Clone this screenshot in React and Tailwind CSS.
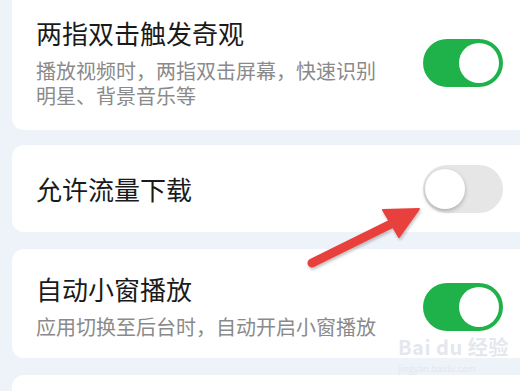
import { useState } from "react";

const Toggle = ({ on, onClick, className = "" }) => (
  <button
    onClick={onClick}
    className={`relative shrink-0 w-[80px] h-[48px] rounded-full transition-colors ${
      on ? "bg-[#1fb24a]" : "bg-[#e6e6e6]"
    } ${className}`}
  >
    <span
      className={`absolute top-[4px] w-[40px] h-[40px] rounded-full bg-white transition-all ${
        on ? "left-[36px]" : "left-[2px] shadow-[0_2px_4px_rgba(0,0,0,0.25)]"
      }`}
    />
  </button>
);

const SettingCard = ({ title, desc, on, onToggle, className }) => (
  <div
    className={`flex items-center w-[520px] bg-white pl-6 pr-[29px] ${className}`}
  >
    <div className="flex-1 min-w-0">
      <div className="text-[26px] leading-[30px] text-[#1a1a1a]">{title}</div>
      {desc && (
        <div className="mt-[10px] text-[20px] leading-[25px] text-[#8a8a8a] pr-[30px]">
          {desc}
        </div>
      )}
    </div>
    <Toggle on={on} onClick={onToggle} />
  </div>
);

export default function App() {
  const [gesture, setGesture] = useState(true);
  const [download, setDownload] = useState(false);
  const [mini, setMini] = useState(true);

  return (
    <div
      className="relative w-[520px] h-[391px] overflow-hidden bg-[#eef2f9] pl-3"
      style={{ fontFamily: '"Noto Sans CJK SC", "Noto Sans", sans-serif' }}
    >
      <div className="flex flex-col">
        <SettingCard
          title="两指双击触发奇观"
          desc="播放视频时，两指双击屏幕，快速识别明星、背景音乐等"
          on={gesture}
          onToggle={() => setGesture(!gesture)}
          className="h-[130px] pt-[18px] pb-[22px] rounded-b-[12px]"
        />
        <SettingCard
          title="允许流量下载"
          on={download}
          onToggle={() => setDownload(!download)}
          className="mt-[15px] h-[87px] rounded-[12px]"
        />
        <SettingCard
          title="自动小窗播放"
          desc="应用切换至后台时，自动开启小窗播放"
          on={mini}
          onToggle={() => setMini(!mini)}
          className="mt-[17px] h-[109px] pt-[6px] rounded-[12px]"
        />
        <div className="mt-[17px] h-[60px] w-[520px] bg-white rounded-t-[12px]" />
      </div>

      {/* annotation arrow */}
      <svg
        className="absolute left-0 top-0 pointer-events-none"
        width="520"
        height="391"
      >
        <defs>
          <filter id="sh" x="-20%" y="-20%" width="140%" height="140%">
            <feDropShadow dx="1" dy="2" stdDeviation="1.5" floodOpacity="0.25" />
          </filter>
        </defs>
        <g filter="url(#sh)" fill="#e8403c" stroke="#e8403c">
          <line x1="312" y1="263" x2="395" y2="222" strokeWidth="9" strokeLinecap="round" />
          <polygon points="419,209 383,210 399,237" strokeWidth="2" strokeLinejoin="round" />
        </g>
      </svg>

      {/* watermark */}
      <div className="absolute left-[398px] top-[336px] pointer-events-none text-[#e4e8ee] flex flex-col gap-[6px]">
        <div className="text-[20px] leading-[22px] font-bold tracking-wide">Bai du 经验</div>
        <div className="text-[9px] leading-[10px]">jingyan.baidu.com</div>
      </div>
    </div>
  );
}
